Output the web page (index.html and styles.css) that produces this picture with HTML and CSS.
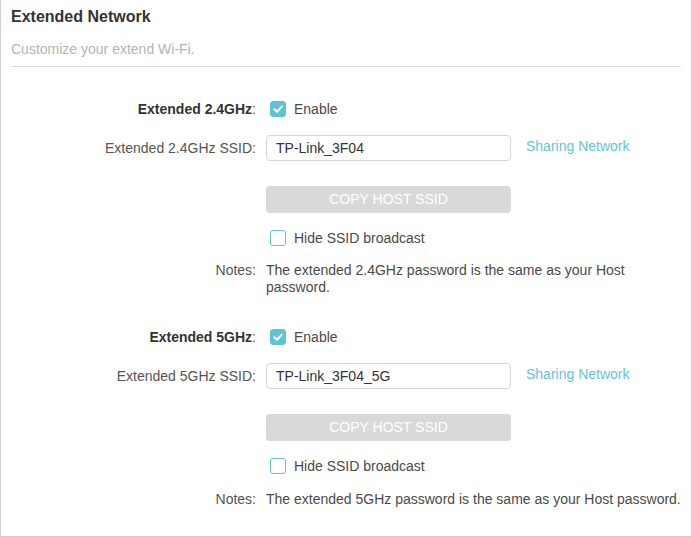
FILE: index.html
```html
<!DOCTYPE html>
<html>
<head>
<meta charset="utf-8">
<link rel="stylesheet" href="styles.css">
</head>
<body>
<div class="panel">
  <div class="head">
    <h1 class="title">Extended Network</h1>
    <p class="subtitle">Customize your extend Wi-Fi.</p>
  </div>
  <div class="section">
    <div class="row row-enable">
      <div class="label"><b>Extended 2.4GHz</b>:</div>
      <div class="control"><span class="cb checked"><svg viewBox="0 0 16 16" width="16" height="16"><path d="M4.3 8.3 L7 10.8 L11.8 5.6" fill="none" stroke="#fff" stroke-width="2" stroke-linecap="round" stroke-linejoin="round"/></svg></span><span class="cb-text">Enable</span></div>
    </div>
    <div class="row row-input">
      <div class="label">Extended 2.4GHz SSID:</div>
      <div class="control"><div class="input">TP-Link_3F04</div><span class="link">Sharing Network</span></div>
    </div>
    <div class="row row-btn">
      <div class="label"></div>
      <div class="control"><div class="btn">COPY HOST SSID</div></div>
    </div>
    <div class="row row-hide">
      <div class="label"></div>
      <div class="control"><span class="cb"></span><span class="cb-text">Hide SSID broadcast</span></div>
    </div>
    <div class="row row-notes">
      <div class="label">Notes:</div>
      <div class="control notes">The extended 2.4GHz password is the same as your Host password.</div>
    </div>
  </div>
  <div class="section">
    <div class="row row-enable">
      <div class="label"><b>Extended 5GHz</b>:</div>
      <div class="control"><span class="cb checked"><svg viewBox="0 0 16 16" width="16" height="16"><path d="M4.3 8.3 L7 10.8 L11.8 5.6" fill="none" stroke="#fff" stroke-width="2" stroke-linecap="round" stroke-linejoin="round"/></svg></span><span class="cb-text">Enable</span></div>
    </div>
    <div class="row row-input">
      <div class="label">Extended 5GHz SSID:</div>
      <div class="control"><div class="input">TP-Link_3F04_5G</div><span class="link">Sharing Network</span></div>
    </div>
    <div class="row row-btn">
      <div class="label"></div>
      <div class="control"><div class="btn">COPY HOST SSID</div></div>
    </div>
    <div class="row row-hide">
      <div class="label"></div>
      <div class="control"><span class="cb"></span><span class="cb-text">Hide SSID broadcast</span></div>
    </div>
    <div class="row row-notes">
      <div class="label">Notes:</div>
      <div class="control notes">The extended 5GHz password is the same as your Host password.</div>
    </div>
  </div>
</div>
</body>
</html>
```
FILE: styles.css
```css
* { box-sizing: border-box; }
html, body { margin: 0; padding: 0; background: #fff; }
body {
  font-family: "Liberation Sans", Arial, sans-serif;
  font-size: 14px;
  color: #4a4a4a;
}
.panel {
  width: 692px;
  height: 537px;
  border: 1px solid #cfcfcf;
  border-top: none;
  padding: 0 10px 0 10px;
}
.head {
  border-bottom: 1px solid #dcdcdc;
  height: 67px;
}
.title {
  margin: 0;
  padding-top: 7px;
  font-size: 16px;
  line-height: 19px;
  font-weight: bold;
  color: #333;
}
.subtitle {
  margin: 0;
  padding-top: 15px;
  font-size: 14px;
  line-height: 17px;
  color: #b4b4b4;
}
.section { padding-top: 30px; }
.section + .section { padding-top: 29px; }
.row {
  display: flex;
  align-items: center;
}
.label {
  width: 245px;
  flex: none;
  text-align: right;
  color: #555;
}
.label b { color: #333; }
.control {
  margin-left: 10px;
  display: flex;
  align-items: center;
}
.row-enable { height: 24px; }
.row-input { height: 26px; margin-top: 14px; }
.row-btn { height: 27px; margin-top: 25px; }
.row-hide { height: 24px; margin-top: 13px; }
.row-notes { margin-top: 12px; align-items: flex-start; line-height: 17px; }
.section + .section .row-notes { margin-top: 13px; }
.cb {
  width: 16px;
  height: 16px;
  margin-left: 4px;
  border: 1px solid #5ec3d3;
  border-radius: 3px;
  display: inline-block;
  flex: none;
}
.cb.checked {
  background: #5ec3d3;
  border-color: #5ec3d3;
}
.cb svg { display: block; margin: -1px; }
.cb-text { margin-left: 8px; color: #4a4a4a; }
.input {
  width: 245px;
  height: 26px;
  border: 1px solid #d6d6d6;
  border-radius: 4px;
  padding-left: 9px;
  line-height: 24px;
  color: #333;
}
.link {
  margin-left: 15px;
  color: #66c4d4;
  position: relative;
  top: -2px;
}
.btn {
  width: 245px;
  height: 27px;
  background: #d9d9d9;
  border-radius: 4px;
  color: #fff;
  text-align: center;
  line-height: 27px;
}
.notes {
  display: block;
  width: 416px;
  color: #4a4a4a;
}
```
